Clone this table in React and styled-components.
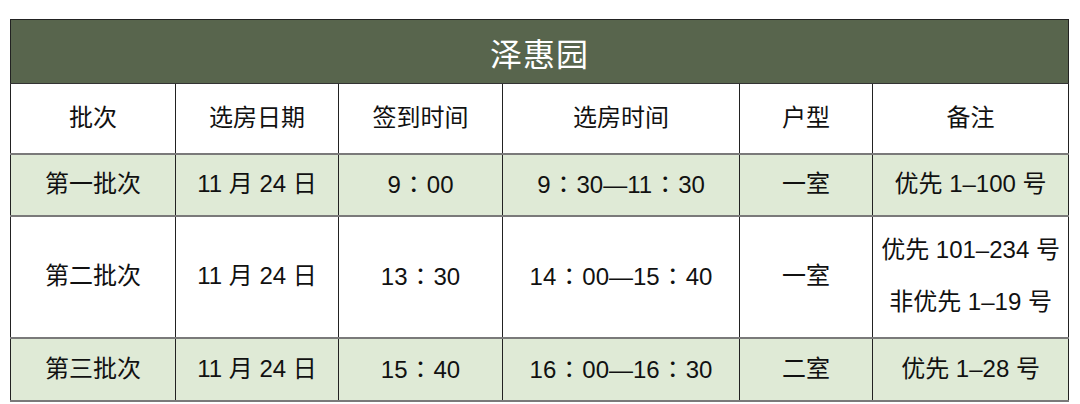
import React from "react";
import styled, { createGlobalStyle } from "styled-components";

const Global = createGlobalStyle`
  html, body { margin: 0; padding: 0; background: #ffffff; }
  body { font-family: "Liberation Sans", "Noto Sans CJK SC", sans-serif; color: #111; }
`;

const Page = styled.div`
  padding: 19px 12px 0 10px;
  width: 1080px;
  box-sizing: border-box;
`;

const Table = styled.table`
  width: 1058px;
  table-layout: fixed;
  border-collapse: collapse;
  border: 1.5px solid #222;
`;

const TitleCell = styled.th`
  height: 63px;
  padding: 0;
  background: #58654d;
  color: #ffffff;
  font-size: 32px;
  font-weight: 400;
  letter-spacing: 1px;
  border-bottom: 1.5px solid #333;
  text-align: center;
  vertical-align: middle;
`;

const Row = styled.tr`
  background: ${(p) => (p.$tint ? "#dfead6" : "#ffffff")};
  height: ${(p) => p.$h}px;
`;

const Cell = styled.td`
  padding: 0;
  font-size: 24px;
  font-weight: 400;
  text-align: center;
  vertical-align: middle;
  border-left: 1.5px solid #222;
  border-right: 1.5px solid #222;
  border-bottom: 2px solid #7a7a7a;
  white-space: nowrap;
  line-height: 1.2;
`;

const Head = styled(Cell).attrs({ as: "th" })`
  font-weight: 400;
`;

const Colon = styled.span`
  font-family: "Noto Sans CJK TC", sans-serif;
  padding: 0 1px;
`;

const NoteLine = styled.div`
  & + & {
    margin-top: 23px;
  }
`;

const cols = [165, 163, 164, 237, 133, 196];

const T = ({ children }) => {
  const parts = String(children).split("：");
  return parts.map((p, i) => (
    <React.Fragment key={i}>
      {p}
      {i < parts.length - 1 && <Colon>：</Colon>}
    </React.Fragment>
  ));
};

const rows = [
  { tint: true, h: 62, cells: ["第一批次", "11 月 24 日", "9：00", "9：30—11：30", "一室"], notes: ["优先 1–100 号"] },
  { tint: false, h: 122, cells: ["第二批次", "11 月 24 日", "13：30", "14：00—15：40", "一室"], notes: ["优先 101–234 号", "非优先 1–19 号"] },
  { tint: true, h: 63, cells: ["第三批次", "11 月 24 日", "15：40", "16：00—16：30", "二室"], notes: ["优先 1–28 号"] },
];

export default function App() {
  return (
    <Page>
      <Global />
      <Table>
        <colgroup>
          {cols.map((w, i) => (
            <col key={i} style={{ width: w }} />
          ))}
        </colgroup>
        <thead>
          <tr>
            <TitleCell colSpan={6}>泽惠园</TitleCell>
          </tr>
          <Row $h={70}>
            {["批次", "选房日期", "签到时间", "选房时间", "户型", "备注"].map((h) => (
              <Head key={h}>{h}</Head>
            ))}
          </Row>
        </thead>
        <tbody>
          {rows.map((r, i) => (
            <Row key={i} $tint={r.tint} $h={r.h}>
              {r.cells.map((c, j) => (
                <Cell key={j}>
                  <T>{c}</T>
                </Cell>
              ))}
              <Cell>
                {r.notes.map((n) => (
                  <NoteLine key={n}>{n}</NoteLine>
                ))}
              </Cell>
            </Row>
          ))}
        </tbody>
      </Table>
    </Page>
  );
}
